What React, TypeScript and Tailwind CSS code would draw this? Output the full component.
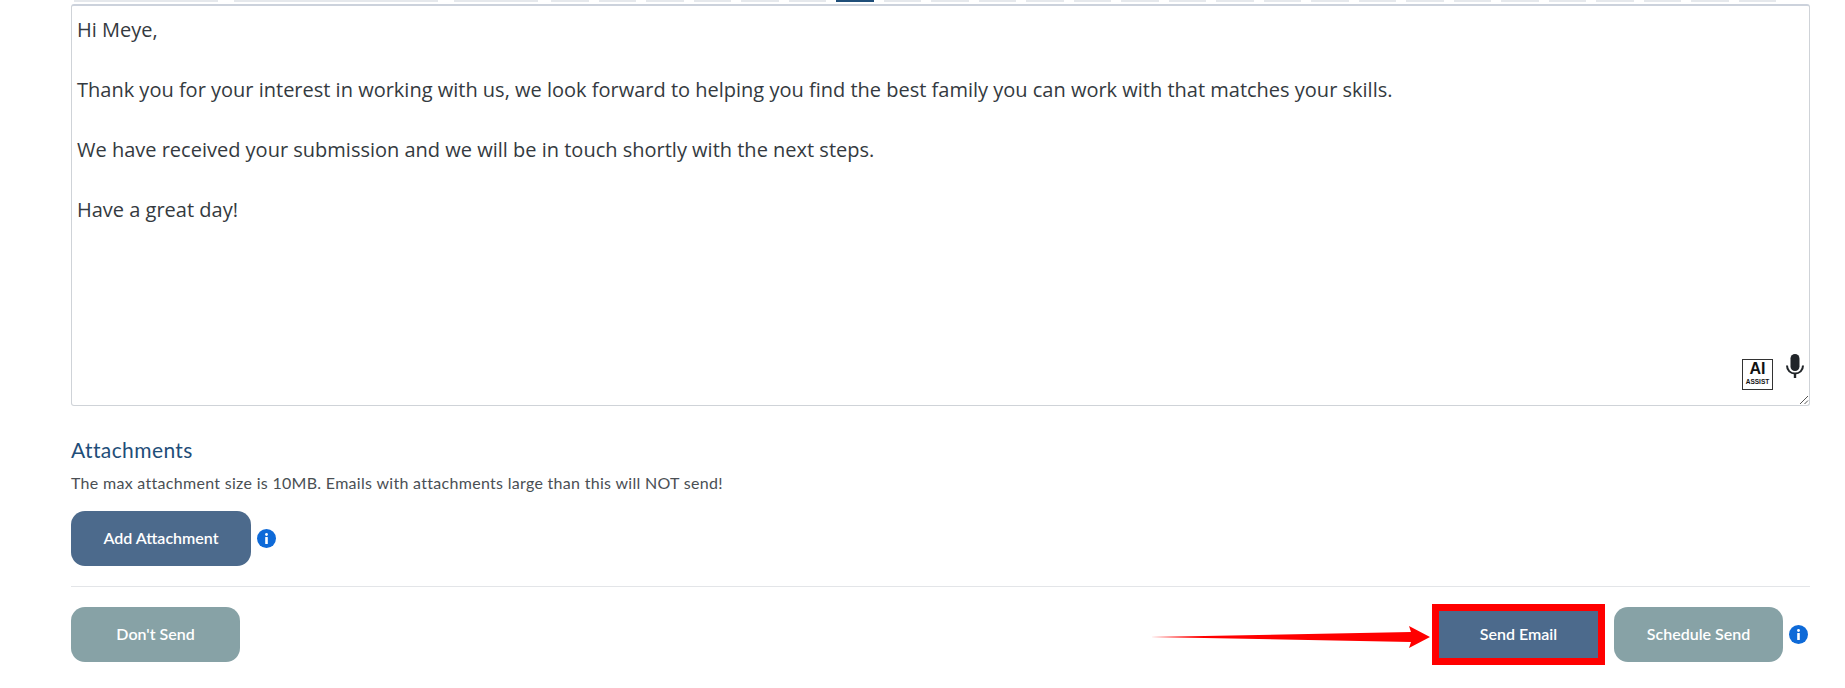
const smallTabs = Array.from({ length: 26 }, (_, i) => i);

function InfoDot() {
  return (
    <span className="flex h-[19px] w-[19px] shrink-0 items-center justify-center rounded-full bg-[#0e6ad8]">
      <svg width="5" height="11" viewBox="0 0 5 11" fill="#fff">
        <circle cx="2.5" cy="1.5" r="1.4" />
        <rect x="1.2" y="4" width="2.6" height="7" rx="0.5" />
      </svg>
    </span>
  );
}

function PageButton({
  label,
  className,
}: {
  label: string;
  className: string;
}) {
  return (
    <button
      className={`flex h-[55px] items-center justify-center rounded-[14px] pb-[2px] text-[16px] font-semibold text-white ${className}`}
    >
      {label}
    </button>
  );
}

export default function App() {
  return (
    <div className="h-[688px] w-[1845px] overflow-hidden bg-white font-['Lato',sans-serif]">
      <div className="pl-[71px] pr-[35px]">
        {/* toolbar cut off at the top of the shot */}
        <div className="flex h-[2px] pl-[3px]">
          <div className="mr-[16px] w-[144px] bg-[#e5e8ec]" />
          <div className="mr-[16px] w-[204px] bg-[#e5e8ec]" />
          <div className="mr-[13px] w-[84px] bg-[#e5e8ec]" />
          <div className="flex gap-[10px]">
            {smallTabs.map((i) => (
              <div
                key={i}
                className={`w-[37.5px] ${i === 6 ? "bg-[#1f4e79]" : "bg-[#e5e8ec]"}`}
              />
            ))}
          </div>
        </div>

        <div className="relative mt-[2px] h-[402px] rounded-[3px] border border-[#cfd3d8] border-t-2 border-t-[#ccd2dc] px-[5px] pt-[9px] font-['Open_Sans',sans-serif] text-[20px] leading-[30px] text-[#343a40]">
          <p>Hi Meye,</p>
          <p className="mt-[30px]">
            Thank you for your interest in working with us, we look forward to
            helping you find the best family you can work with that matches your
            skills.
          </p>
          <p className="mt-[30px]">
            We have received your submission and we will be in touch shortly
            with the next steps.
          </p>
          <p className="mt-[30px]">Have a great day!</p>

          <div className="absolute bottom-[15px] right-[36px] flex h-[31px] w-[31px] flex-col items-center border border-[#333] bg-white font-['Liberation_Sans',sans-serif] text-[#111]">
            <span className="text-[16px] font-bold leading-[18px]">AI</span>
            <span className="text-[6.5px] font-bold leading-[8px]">ASSIST</span>
          </div>
          <svg
            className="absolute bottom-[27px] right-[5px]"
            width="18"
            height="24"
            viewBox="0 0 18 24"
            fill="none"
          >
            <rect x="4.5" y="0" width="9" height="17" rx="4.5" fill="#212529" />
            <path
              d="M1 11.5 C1 16.5 4.5 19.5 9 19.5 C13.5 19.5 17 16.5 17 11.5"
              stroke="#212529"
              strokeWidth="2"
            />
            <path d="M9 19 V24" stroke="#212529" strokeWidth="2.4" />
          </svg>
          <svg
            className="absolute bottom-0 right-0"
            width="11"
            height="11"
            viewBox="0 0 11 11"
            stroke="#555"
            fill="none"
          >
            <path d="M2 10 L10 2 M6.5 10 L10 6.5" />
          </svg>
        </div>

        <h3 className="mt-[32px] text-[21px] font-normal leading-[24px] tracking-[0.4px] text-[#1f4e79]">
          Attachments
        </h3>
        <p className="mt-[11px] text-[16px] leading-[20px] tracking-[0.3px] text-[#4a4f54]">
          The max attachment size is 10MB. Emails with attachments large than
          this will NOT send!
        </p>

        <div className="mt-[18px] flex items-center gap-[6px]">
          <PageButton label="Add Attachment" className="w-[180px] bg-[#4c6a8c]" />
          <InfoDot />
        </div>

        <div className="mt-[20px] border-t border-[#e3e5e8] pt-[17px]">
          <div className="flex items-center justify-between">
            <PageButton label="Don't Send" className="w-[169px] bg-[#87a2a6]" />
            <div className="flex items-center pr-[2px]">
              <div className="relative border-[7px] border-[#ff0000]">
                <svg
                  className="absolute right-[calc(100%+9px)] top-[14px]"
                  width="280"
                  height="24"
                  viewBox="0 0 280 24"
                  fill="#ff0000"
                >
                  <path d="M0 12 L261 7 L259 1 L280 12 L259 23 L261 17 Z" />
                </svg>
                <PageButton
                  label="Send Email"
                  className="w-[159px] !h-[47px] !rounded-none bg-[#4c6a8c]"
                />
              </div>
              <PageButton
                label="Schedule Send"
                className="ml-[9px] w-[169px] bg-[#87a2a6]"
              />
              <span className="ml-[6px]">
                <InfoDot />
              </span>
            </div>
          </div>
        </div>
      </div>
    </div>
  );
}
